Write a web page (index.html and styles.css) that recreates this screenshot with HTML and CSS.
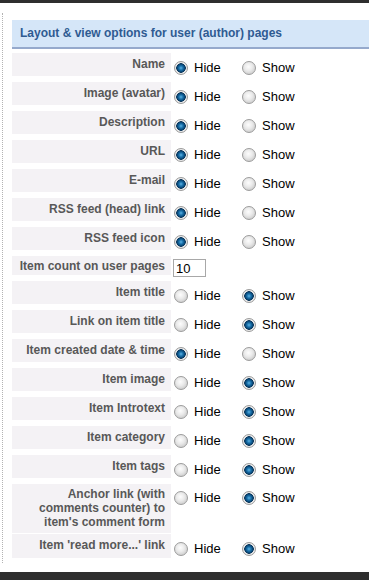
FILE: index.html
```html
<!DOCTYPE html>
<html lang="en">
<head>
    <meta charset="UTF-8">
    <title>User page options</title>
    <link rel="stylesheet" href="styles.css">
</head>
<body>
    <div class="topbar"></div>

    <div class="page">
        <h3 class="panel-title">Layout &amp; view options for user (author) pages</h3>

        <div class="row">
            <div class="key">Name</div>
            <div class="value">
                <label class="opt"><input type="radio" name="userName" checked>Hide</label>
                <label class="opt"><input type="radio" name="userName">Show</label>
            </div>
        </div>
        <div class="row">
            <div class="key">Image (avatar)</div>
            <div class="value">
                <label class="opt"><input type="radio" name="userImage" checked>Hide</label>
                <label class="opt"><input type="radio" name="userImage">Show</label>
            </div>
        </div>
        <div class="row">
            <div class="key">Description</div>
            <div class="value">
                <label class="opt"><input type="radio" name="userDescription" checked>Hide</label>
                <label class="opt"><input type="radio" name="userDescription">Show</label>
            </div>
        </div>
        <div class="row">
            <div class="key">URL</div>
            <div class="value">
                <label class="opt"><input type="radio" name="userURL" checked>Hide</label>
                <label class="opt"><input type="radio" name="userURL">Show</label>
            </div>
        </div>
        <div class="row">
            <div class="key">E-mail</div>
            <div class="value">
                <label class="opt"><input type="radio" name="userEmail" checked>Hide</label>
                <label class="opt"><input type="radio" name="userEmail">Show</label>
            </div>
        </div>
        <div class="row">
            <div class="key">RSS feed (head) link</div>
            <div class="value">
                <label class="opt"><input type="radio" name="userFeedLink" checked>Hide</label>
                <label class="opt"><input type="radio" name="userFeedLink">Show</label>
            </div>
        </div>
        <div class="row">
            <div class="key">RSS feed icon</div>
            <div class="value">
                <label class="opt"><input type="radio" name="userFeedIcon" checked>Hide</label>
                <label class="opt"><input type="radio" name="userFeedIcon">Show</label>
            </div>
        </div>
        <div class="row row-count">
            <div class="key">Item count on user pages</div>
            <div class="value">
                <input class="text-input" type="text" value="10">
            </div>
        </div>
        <div class="row">
            <div class="key">Item title</div>
            <div class="value">
                <label class="opt"><input type="radio" name="userItemTitle">Hide</label>
                <label class="opt"><input type="radio" name="userItemTitle" checked>Show</label>
            </div>
        </div>
        <div class="row">
            <div class="key">Link on item title</div>
            <div class="value">
                <label class="opt"><input type="radio" name="userItemTitleLinked">Hide</label>
                <label class="opt"><input type="radio" name="userItemTitleLinked" checked>Show</label>
            </div>
        </div>
        <div class="row">
            <div class="key">Item created date &amp; time</div>
            <div class="value">
                <label class="opt"><input type="radio" name="userItemDateCreated" checked>Hide</label>
                <label class="opt"><input type="radio" name="userItemDateCreated">Show</label>
            </div>
        </div>
        <div class="row">
            <div class="key">Item image</div>
            <div class="value">
                <label class="opt"><input type="radio" name="userItemImage">Hide</label>
                <label class="opt"><input type="radio" name="userItemImage" checked>Show</label>
            </div>
        </div>
        <div class="row">
            <div class="key">Item Introtext</div>
            <div class="value">
                <label class="opt"><input type="radio" name="userItemIntroText">Hide</label>
                <label class="opt"><input type="radio" name="userItemIntroText" checked>Show</label>
            </div>
        </div>
        <div class="row">
            <div class="key">Item category</div>
            <div class="value">
                <label class="opt"><input type="radio" name="userItemCategory">Hide</label>
                <label class="opt"><input type="radio" name="userItemCategory" checked>Show</label>
            </div>
        </div>
        <div class="row">
            <div class="key">Item tags</div>
            <div class="value">
                <label class="opt"><input type="radio" name="userItemTags">Hide</label>
                <label class="opt"><input type="radio" name="userItemTags" checked>Show</label>
            </div>
        </div>
        <div class="row row-tall">
            <div class="key">Anchor link (with comments counter) to item's comment form</div>
            <div class="value">
                <label class="opt"><input type="radio" name="userItemCommentsAnchor">Hide</label>
                <label class="opt"><input type="radio" name="userItemCommentsAnchor" checked>Show</label>
            </div>
        </div>
        <div class="row row-last">
            <div class="key">Item 'read more...' link</div>
            <div class="value">
                <label class="opt"><input type="radio" name="userItemReadMore">Hide</label>
                <label class="opt"><input type="radio" name="userItemReadMore" checked>Show</label>
            </div>
        </div>
    </div>

    <div class="bottombar"></div>
</body>
</html>
```

FILE: styles.css
```css
* {
    margin: 0;
    padding: 0;
    box-sizing: border-box;
}

body {
    font-family: 'Liberation Sans', Arial, sans-serif;
    background: #fff;
    color: #000;
    overflow: hidden;
}

.topbar {
    height: 3px;
    background: #2e2e2e;
}

.bottombar {
    height: 8px;
    margin-top: 9px;
    background: #2e2e2e;
}

.page {
    margin: 10px 0 0 2px;
    border-left: 1px dotted #b3b3b3;
    padding: 7px 0 5px 9px;
}

.panel-title {
    height: 29px;
    line-height: 27px;
    padding-left: 8px;
    margin-bottom: 4px;
    background: #d5e6f8;
    border-bottom: 2px solid #95a9cc;
    color: #2f5b92;
    font-size: 12px;
    font-weight: bold;
    white-space: nowrap;
}

.row {
    display: flex;
    align-items: flex-start;
    height: 23px;
    margin-bottom: 6px;
}

.row-count {
    height: 19px;
}

.row-tall {
    height: 49px;
    margin-bottom: 1px;
}

.row-last {
    height: 24px;
    margin-bottom: 0;
}

.key {
    width: 159px;
    height: 100%;
    flex-shrink: 0;
    padding: 4px 6px 0 2px;
    background: #f4f2f5;
    color: #585858;
    font-size: 12px;
    font-weight: bold;
    line-height: 14px;
    text-align: right;
}

.row-count .key {
    padding-top: 3px;
    white-space: nowrap;
}

.row-tall .key {
    padding: 3px 6px 0 10px;
}

.value {
    display: flex;
    padding: 8px 0 0 3px;
}

.row-tall .value {
    padding-top: 7px;
}

.opt {
    display: flex;
    align-items: center;
    width: 68px;
    height: 14px;
    font-size: 13px;
    line-height: 14px;
    white-space: nowrap;
}

.opt input {
    appearance: none;
    -webkit-appearance: none;
    width: 14px;
    height: 14px;
    margin-right: 6px;
    border: 1px solid #9c9c9c;
    border-radius: 50%;
    background: radial-gradient(circle at 45% 40%, #fdfdfd 0, #eaeaea 4px, #d2d2d2 7px);
}

.opt input:checked {
    background: radial-gradient(circle at 50% 50%, #5fb4e4 0, #1b73ad 2px, #0b4d7e 3.5px, #0a3458 4.5px, #f0f0f0 5px, #dadada 7px);
}

.text-input {
    width: 33px;
    height: 18px;
    margin: 3px 0 0 -1px;
    padding: 0 2px;
    border: 1px solid #a8a8a8;
    font-family: 'Liberation Sans', Arial, sans-serif;
    font-size: 13px;
    color: #000;
    outline: none;
}

.row-count .value {
    padding-top: 0;
}
```
